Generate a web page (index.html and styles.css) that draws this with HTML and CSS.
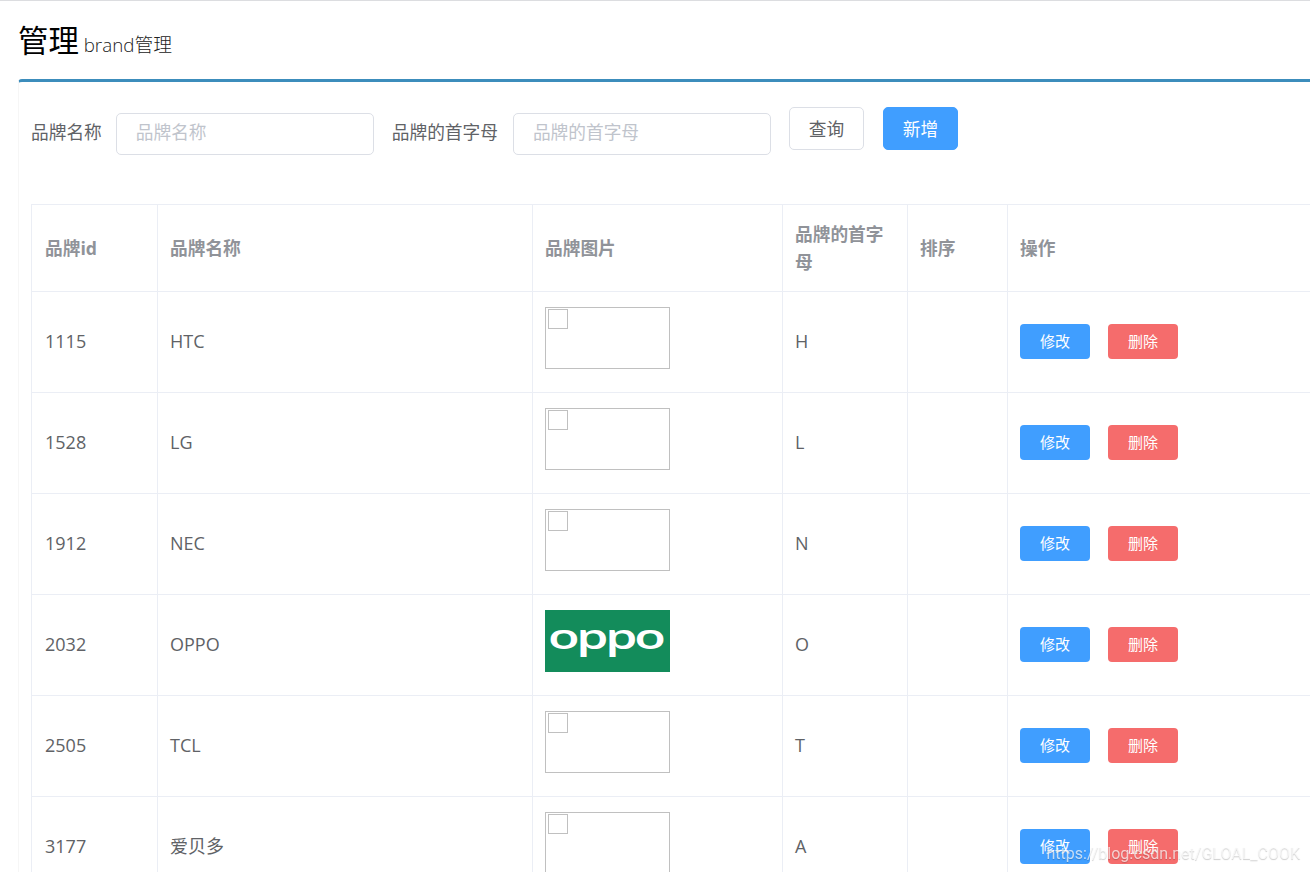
FILE: index.html
```html
<!DOCTYPE html>
<html lang="zh-CN">
  <head>
    <meta charset="UTF-8" />
    <title>brand管理</title>
    <link rel="stylesheet" href="styles.css">
  </head>
  <body>
    <section class="content-header">
      <h1>管理 <small>brand管理</small></h1>
    </section>
    <div class="box">
      <form class="search-form">
        <label class="form-label" for="name">品牌名称</label>
        <input class="form-input" id="name" type="text" placeholder="品牌名称" />
        <label class="form-label" for="letter">品牌的首字母</label>
        <input class="form-input" id="letter" type="text" placeholder="品牌的首字母" />
        <button type="button" class="btn">查询</button>
        <button type="button" class="btn btn-primary">新增</button>
      </form>

      <table class="table">
        <colgroup>
          <col class="col-id" />
          <col class="col-name" />
          <col class="col-image" />
          <col class="col-letter" />
          <col class="col-seq" />
          <col class="col-action" />
        </colgroup>
        <thead>
          <tr>
            <th>品牌id</th>
            <th>品牌名称</th>
            <th>品牌图片</th>
            <th>品牌的首字母</th>
            <th>排序</th>
            <th>操作</th>
          </tr>
        </thead>
        <tbody>
          <tr>
            <td>1115</td>
            <td>HTC</td>
            <td><div class="no-image"></div></td>
            <td>H</td>
            <td></td>
            <td>
              <div class="actions">
                <button class="btn-mini edit">修改</button>
                <button class="btn-mini delete">删除</button>
              </div>
            </td>
          </tr>
          <tr>
            <td>1528</td>
            <td>LG</td>
            <td><div class="no-image"></div></td>
            <td>L</td>
            <td></td>
            <td>
              <div class="actions">
                <button class="btn-mini edit">修改</button>
                <button class="btn-mini delete">删除</button>
              </div>
            </td>
          </tr>
          <tr>
            <td>1912</td>
            <td>NEC</td>
            <td><div class="no-image"></div></td>
            <td>N</td>
            <td></td>
            <td>
              <div class="actions">
                <button class="btn-mini edit">修改</button>
                <button class="btn-mini delete">删除</button>
              </div>
            </td>
          </tr>
          <tr>
            <td>2032</td>
            <td>OPPO</td>
            <td>
              <svg class="brand-image" width="125" height="62" viewBox="0 0 125 62">
                <rect width="125" height="62" fill="#138c5b" />
                <text class="logo-text" transform="translate(3 39) scale(1.48 1)">oppo</text>
              </svg>
            </td>
            <td>O</td>
            <td></td>
            <td>
              <div class="actions">
                <button class="btn-mini edit">修改</button>
                <button class="btn-mini delete">删除</button>
              </div>
            </td>
          </tr>
          <tr>
            <td>2505</td>
            <td>TCL</td>
            <td><div class="no-image"></div></td>
            <td>T</td>
            <td></td>
            <td>
              <div class="actions">
                <button class="btn-mini edit">修改</button>
                <button class="btn-mini delete">删除</button>
              </div>
            </td>
          </tr>
          <tr>
            <td>3177</td>
            <td>爱贝多</td>
            <td><div class="no-image"></div></td>
            <td>A</td>
            <td></td>
            <td>
              <div class="actions">
                <button class="btn-mini edit">修改</button>
                <button class="btn-mini delete">删除</button>
              </div>
            </td>
          </tr>
        </tbody>
      </table>
    </div>
    <div class="watermark">https://blog.csdn.net/GLOAL_COOK</div>
  </body>
</html>
```
FILE: styles.css
```css
* {
  box-sizing: border-box;
}

body {
  margin: 0;
  height: 872px;
  overflow: hidden;
  background: #fff;
  border-top: 1px solid #dcdde0;
  color: #606266;
  font-family: "Open Sans", "Noto Sans CJK SC", sans-serif;
  font-size: 17.7px;
}

button,
input {
  font-family: inherit;
}

.content-header {
  height: 78px;
  padding: 18px 18px 0;
}

h1 {
  margin: 0;
  color: #000;
  font-size: 30.4px;
  font-weight: 400;
  line-height: 44px;
}

h1 small {
  margin-left: -3px;
  color: #222;
  font-size: 18.8px;
  font-weight: 300;
}

.box {
  margin-left: 18px;
  padding: 25px 0 0 12px;
  border-top: 3px solid #3c8dbc;
  border-left: 1px solid #f6f6f6;
  border-radius: 4px 0 0 0;
}

.search-form {
  display: flex;
  align-items: flex-start;
  height: 97px;
}

.form-label {
  padding: 5px 14px 0 0;
  line-height: 40px;
}

.form-input {
  width: 258px;
  height: 42px;
  margin: 6px 18px 0 0;
  padding: 0 19px 4px;
  border: 1px solid #dcdfe6;
  border-radius: 5px;
  color: #606266;
  font-size: 17.7px;
}

.form-input + .form-label {
  padding-right: 15px;
}

.form-input::placeholder {
  color: #c0c4cc;
}

.btn {
  width: 75px;
  height: 43px;
  margin-right: 19px;
  padding: 0 0 2px;
  border: 1px solid #dcdfe6;
  border-radius: 5px;
  background: #fff;
  color: #606266;
  font-size: 17.7px;
}

.btn-primary {
  border-color: #409eff;
  background: #409eff;
  color: #fff;
}

.table {
  width: 100%;
  table-layout: fixed;
  border-collapse: separate;
  border-spacing: 0;
  border-top: 1px solid #ebeef5;
  border-left: 1px solid #ebeef5;
}

.col-id {
  width: 126px;
}

.col-name {
  width: 375px;
}

.col-image {
  width: 250px;
}

.col-letter {
  width: 125px;
}

.col-seq {
  width: 100px;
}

th,
td {
  padding: 0 12px 2px;
  border-right: 1px solid #ebeef5;
  border-bottom: 1px solid #ebeef5;
  line-height: 28px;
  text-align: left;
  vertical-align: middle;
}

th:first-child,
td:first-child {
  padding-left: 13px;
}

th:last-child,
td:last-child {
  border-right: 0;
}

th {
  height: 87px;
  padding-bottom: 1px;
  color: #909399;
  font-weight: 700;
}

td {
  height: 101px;
  font-size: 18px;
}

/* placeholder for a picture that failed to load */
.no-image {
  width: 125px;
  height: 62px;
  margin-bottom: 6px;
  padding: 1px 2px;
  border: 1px solid #c0c0c0;
}

.no-image::before {
  content: "";
  display: block;
  width: 18px;
  height: 18px;
  border: 1px solid #c0c0c0;
}

.brand-image {
  display: block;
  margin-bottom: 6px;
}

.logo-text {
  fill: #fff;
  font-family: "Open Sans", sans-serif;
  font-size: 35px;
  font-weight: 600;
  letter-spacing: -2.2px;
}

.actions {
  display: flex;
  gap: 18px;
}

.btn-mini {
  width: 70px;
  height: 35px;
  padding: 0 0 2px;
  border: 0;
  border-radius: 4px;
  color: #fff;
  font-size: 15px;
}

.edit {
  background: #409eff;
}

.delete {
  background: #f56c6c;
}

.watermark {
  position: fixed;
  right: 10px;
  bottom: 8px;
  color: rgba(255, 255, 255, 0.7);
  font-family: Roboto, sans-serif;
  font-size: 16px;
  line-height: 20px;
  text-shadow: 0 1px 1px rgba(0, 0, 0, 0.2);
}
```
